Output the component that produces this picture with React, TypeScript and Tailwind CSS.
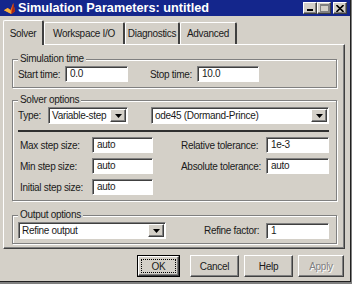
import React from 'react';

const raised =
  'border border-t-white border-l-white border-r-[#404040] border-b-[#404040] shadow-[inset_-1px_-1px_0_#808080]';
const sunken =
  'border border-t-[#808080] border-l-[#808080] border-r-white border-b-white shadow-[inset_1px_1px_0_#404040]';
const etched = 'border border-[#808080] shadow-[1px_1px_0_#fff,inset_1px_1px_0_#fff]';

const Field = ({ value, className }: { value: string; className: string }) => (
  <div className={`h-[16px] bg-white ${sunken} flex items-center pl-[4px] leading-none ${className}`}>
    {value}
  </div>
);

const Arrow = () => (
  <div className={`w-[16px] h-[13px] mr-[1px] bg-[#d4d0c8] ${raised} flex items-center justify-center`}>
    <svg width="7" height="4" viewBox="0 0 7 4">
      <path d="M0 0h7L3.5 4z" fill="#000" />
    </svg>
  </div>
);

const Select = ({ value, className }: { value: string; className: string }) => (
  <div className={`h-[17px] bg-white ${sunken} flex items-center justify-between pl-[3px] leading-none ${className}`}>
    <span>{value}</span>
    <Arrow />
  </div>
);

const Group = ({
  label,
  className,
  children,
}: {
  label: string;
  className: string;
  children: React.ReactNode;
}) => (
  <div className={`relative w-[325px] ${etched} ${className}`}>
    <span className="absolute -top-[8px] left-[5px] px-[2px] bg-[#d4d0c8] leading-[13px]">{label}</span>
    {children}
  </div>
);

const Tab = ({ label, active, className }: { label: string; active?: boolean; className: string }) =>
  active ? (
    <div
      className={`relative z-10 -mb-px h-[25px] bg-[#d4d0c8] border-l border-t border-white border-r-2 border-r-[#404040] rounded-t-[2px] flex items-center justify-center ${className}`}
    >
      {label}
    </div>
  ) : (
    <div
      className={`h-[22px] border-l border-t border-white border-r-2 border-r-[#404040] rounded-t-[2px] flex items-center justify-center ${className}`}
    >
      {label}
    </div>
  );

const Button = ({ label, className, disabled }: { label: string; className: string; disabled?: boolean }) => (
  <div className={`h-[22px] ${raised} flex items-center justify-center ${className}`}>
    <span className={disabled ? 'text-[#808080] [text-shadow:1px_1px_0_#fff]' : ''}>{label}</span>
  </div>
);

export default function App() {
  return (
    <div className="w-[352px] h-[284px] bg-[#808080] font-['Liberation_Sans',Arial,sans-serif] text-[10px] tracking-[-0.3px] text-[#1a1a1a]">
      <div className="w-[351px] h-[282px] bg-[#d4d0c8] border-r border-b border-[#202020] flex flex-col">
        {/* title bar */}
        <div className="h-[16px] bg-[#14268c] flex items-center pl-[3px] pr-[3px]">
          <svg width="13" height="13" viewBox="0 0 14 14">
            <path d="M1 9 L5 6.5 L8 8.5 L11 1 L13 10 L9 13 Z" fill="#e8641c" />
            <path d="M5 6.5 L8 8.5 L9 13 L1 9 Z" fill="#f5b33d" />
            <path d="M11 1 L9 13 L13 10Z" fill="#a82a14" />
          </svg>
          <span className="ml-[2px] text-white font-bold text-[12.7px] tracking-normal leading-none">
            Simulation Parameters: untitled
          </span>
          <div className="ml-auto flex items-center">
            <div className={`w-[14px] h-[12px] bg-[#d4d0c8] ${raised} flex items-end justify-center pb-[2px]`}>
              <div className="w-[6px] h-[2px] bg-black -ml-[1px]" />
            </div>
            <div className={`w-[14px] h-[12px] bg-[#d4d0c8] ${raised} flex items-center justify-center`}>
              <div className="w-[9px] h-[8px] border border-t-2 border-[#808080]" />
            </div>
            <div className={`ml-[2px] w-[14px] h-[12px] bg-[#d4d0c8] ${raised} flex items-center justify-center`}>
              <svg width="8" height="7" viewBox="0 0 8 7">
                <path d="M0.5 0 L4 3.5 L7.5 0 M0.5 7 L4 3.5 L7.5 7" stroke="#000" strokeWidth="1.6" fill="none" />
              </svg>
            </div>
          </div>
        </div>

        {/* tabs */}
        <div className="mt-[4px] ml-[3px] h-[24px] flex items-end">
          <Tab label="Solver" active className="w-[41px]" />
          <Tab label="Workspace I/O" className="w-[81px]" />
          <Tab label="Diagnostics" className="w-[55px]" />
          <Tab label="Advanced" className="w-[57px]" />
        </div>

        {/* panel */}
        <div className="ml-[3px] w-[342px] h-[205px] border border-t-white border-l-white border-r-[#404040] border-b-[#404040] shadow-[inset_-1px_-1px_0_#808080] pl-[8px] pt-[14px] flex flex-col">
          <Group label="Simulation time" className="h-[29px] pt-[6px] pl-[5px]">
            <div className="flex items-center">
              <span className="w-[47px]">Start time:</span>
              <Field value="0.0" className="w-[63px]" />
              <span className="ml-[22px] w-[47px]">Stop time:</span>
              <Field value="10.0" className="w-[62px]" />
            </div>
          </Group>

          <Group label="Solver options" className="mt-[12px] h-[101px] pt-[6px] pl-[5px]">
            <div className="flex items-center">
              <span className="w-[30px]">Type:</span>
              <Select value="Variable-step" className="w-[80px]" />
              <Select value="ode45 (Dormand-Prince)" className="ml-[23px] w-[178px]" />
            </div>
            <div className="mt-[6px] w-[311px] h-[2px] bg-[#303030]" />
            <div className="mt-[5px] pl-[2px] flex flex-col gap-[5px]">
              <div className="flex items-center">
                <span className="w-[72px]">Max step size:</span>
                <Field value="auto" className="w-[61px]" />
                <span className="ml-[28px] w-[85px]">Relative tolerance:</span>
                <Field value="1e-3" className="w-[63px]" />
              </div>
              <div className="flex items-center">
                <span className="w-[72px]">Min step size:</span>
                <Field value="auto" className="w-[61px]" />
                <span className="ml-[28px] w-[85px]">Absolute tolerance:</span>
                <Field value="auto" className="w-[63px]" />
              </div>
              <div className="flex items-center">
                <span className="w-[72px]">Initial step size:</span>
                <Field value="auto" className="w-[61px]" />
              </div>
            </div>
          </Group>

          <Group label="Output options" className="mt-[14px] h-[29px] pt-[6px] pl-[5px]">
            <div className="flex items-center">
              <Select value="Refine output" className="w-[148px]" />
              <span className="ml-[38px] w-[62px]">Refine factor:</span>
              <Field value="1" className="w-[63px]" />
            </div>
          </Group>
        </div>

        {/* buttons */}
        <div className="mt-[6px] ml-[137px] flex">
          <div className="w-[43px] h-[22px] border border-black">
            <div className={`h-full ${raised} p-[2px]`}>
              <div className="h-full border border-dotted border-black flex items-center justify-center">OK</div>
            </div>
          </div>
          <Button label="Cancel" className="ml-[10px] w-[49px]" />
          <Button label="Help" className="ml-[5px] w-[49px]" />
          <Button label="Apply" disabled className="ml-[5px] w-[46px]" />
        </div>
      </div>
    </div>
  );
}
